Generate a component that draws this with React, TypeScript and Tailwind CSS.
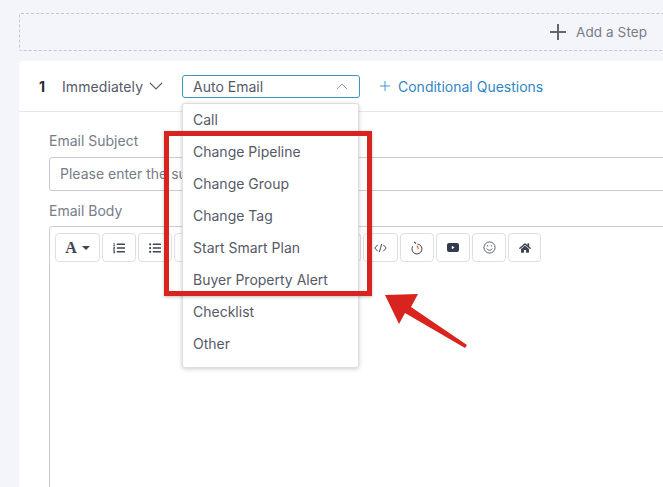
import React from 'react';
import { FaHome, FaListOl, FaListUl, FaBold } from 'react-icons/fa';

const menuItems = ['Call', 'Change Pipeline', 'Change Group', 'Change Tag', 'Start Smart Plan', 'Buyer Property Alert', 'Checklist', 'Other'];

function ToolButton({ children, className = 'w-[34px]' }: { children?: React.ReactNode; className?: string }) {
    return (
        <div className={`h-[29px] shrink-0 rounded-[4px] border border-[#dcdfe4] bg-white flex items-center justify-center text-[#3f4454] ${className}`}>
            {children}
        </div>
    );
}

function PlusMark({ size, strokeWidth, className }: { size: number; strokeWidth: number; className?: string }) {
    return (
        <svg width={size} height={size} viewBox={`0 0 ${size} ${size}`} className={className} fill="none" stroke="currentColor" strokeWidth={strokeWidth}>
            <path d={`M${size / 2} 0V${size}M0 ${size / 2}H${size}`} />
        </svg>
    );
}

export default function App() {
    return (
        <div className="relative w-[663px] h-[487px] overflow-hidden bg-[#f4f5fa] pl-[19px] pt-[13px] font-['Inter',sans-serif] text-[14px] text-[#555a66]">
            {/* Add a step */}
            <div className="h-[38px] w-[700px] border border-dashed border-[#c4c7cf] rounded-[2px] flex items-center">
                <div className="ml-[530px] flex items-center gap-[10px] text-[#777c88]">
                    <PlusMark size={16} strokeWidth={2} className="text-[#5f6471]" />
                    <span className="text-[13.5px] tracking-[0.1px]">Add a Step</span>
                </div>
            </div>

            {/* Step card */}
            <div className="mt-[10px] w-[700px] h-[440px] bg-white rounded-t-[4px]">
                <div className="h-[51px] border-b border-[#e4e6ea] flex items-center pl-[20px]">
                    <span className="font-bold text-[#262a33] w-[23px]">1</span>
                    <span className="w-[80px] tracking-[0.08px]">Immediately</span>
                    <svg width="14" height="8" viewBox="0 0 14 8" className="ml-[7px] text-[#5a5f6b]" fill="none" stroke="currentColor" strokeWidth="1.1">
                        <path d="M1 1l6 6 6-6" />
                    </svg>
                    <div className="ml-[19px] w-[178px] h-[23px] rounded-[3px] border border-[#3d94c4] flex items-center justify-between pl-[10px] pr-[11px]">
                        <span>Auto Email</span>
                        <svg width="12" height="7" viewBox="0 0 12 7" className="text-[#9a9ea8]" fill="none" stroke="currentColor" strokeWidth="1">
                            <path d="M1 6l5-5 5 5" />
                        </svg>
                    </div>
                    <div className="ml-[20px] flex items-center gap-[8px] text-[#2f86c5]">
                        <PlusMark size={10} strokeWidth={1} className="text-[#4b95cc]" />
                        <span>Conditional Questions</span>
                    </div>
                </div>

                <div className="pl-[30px] pt-[19px]">
                    <div className="text-[#777c88] leading-[20px]">Email Subject</div>
                    <div className="mt-[6px] h-[34px] border border-[#c9ccd2] rounded-[3px] flex items-center pl-[10px] pb-[1px] text-[#777c88]">
                        Please enter the subject
                    </div>
                    <div className="mt-[10px] text-[#777c88] leading-[20px]">Email Body</div>
                    <div className="mt-[5px] h-[300px] border border-[#c9ccd2] rounded-[3px] pl-[5px] pt-[6px]">
                        <div className="flex gap-[2px]">
                            <ToolButton className="w-[45px] gap-[5px]">
                                <span className="font-['Liberation_Serif',serif] font-bold text-[16px] leading-none">A</span>
                                <span className="w-0 h-0 border-x-[4px] border-x-transparent border-t-[4px] border-t-[#3f4454]" />
                            </ToolButton>
                            <ToolButton><FaListOl className="w-[12px] h-[12px]" /></ToolButton>
                            <ToolButton><FaListUl className="w-[12px] h-[12px]" /></ToolButton>
                            <ToolButton><FaBold className="w-[11px] h-[11px]" /></ToolButton>
                            <ToolButton />
                            <ToolButton />
                            <ToolButton />
                            <ToolButton className="w-[43px]" />
                            <ToolButton className="w-[35px]">
                                <svg viewBox="0 0 16 12" className="w-[13px] h-[10px]" fill="none" stroke="currentColor" strokeWidth="1.2">
                                    <path d="M4.500 2 1 6l3.500 4M11.500 2 15 6l-3.500 4M9.500 1 6.500 11" />
                                </svg>
                            </ToolButton>
                            <ToolButton>
                                <svg viewBox="0 0 14 14" className="w-[14px] h-[14px]" fill="none">
                                    <path d="M4 .8 6 2.500" stroke="#3f4454" strokeWidth="1.100" />
                                    <path d="M7.500 3a5 5 0 1 1-4.800 2.300" stroke="#3f4454" strokeWidth="1" />
                                    <path d="M7 4.500 8.500 8" stroke="#e0733c" strokeWidth="1.300" />
                                </svg>
                            </ToolButton>
                            <ToolButton>
                                <svg viewBox="0 0 12 9" className="w-[12px] h-[9px]">
                                    <rect width="12" height="9" rx="2" fill="#343a4e" />
                                    <path d="M4.800 2.800v3.400L7.600 4.500Z" fill="#fff" />
                                </svg>
                            </ToolButton>
                            <ToolButton>
                                <svg viewBox="0 0 14 14" className="w-[13px] h-[13px]" fill="none" stroke="currentColor" strokeWidth="0.9">
                                    <circle cx="7" cy="7" r="6" />
                                    <path d="M4 8.200c1.500 2.300 4.500 2.300 6 0" />
                                    <path d="M5 4.500v1.500M9 4.500v1.500" />
                                </svg>
                            </ToolButton>
                            <ToolButton className="w-[33px]"><FaHome className="w-[12px] h-[12px]" /></ToolButton>
                        </div>
                    </div>
                </div>
            </div>

            {/* Dropdown menu */}
            <div className="absolute left-[182px] top-[103px] w-[177px] h-[265px] bg-white border border-[#dcdee3] rounded-[3px] shadow-[0_1px_4px_rgba(0,0,0,0.2)]">
                {menuItems.map(item => (
                    <div key={item} className="h-[32px] flex items-center pl-[10px] pb-[2px]">{item}</div>
                ))}
            </div>

            {/* Annotation */}
            <div className="absolute left-[164px] top-[131px] w-[208px] h-[165px] border-[5px] border-[#d9231f] shadow-[0_1px_3px_rgba(0,0,0,0.25)]" />
            <svg className="absolute left-[380px] top-[285px]" width="95" height="70" viewBox="0 0 95 70">
                <path d="M5 10 L38 9 L31 22 L87 60 L85 63 L25 28 L19 39 Z" fill="#d9231f" />
            </svg>
        </div>
    );
}
